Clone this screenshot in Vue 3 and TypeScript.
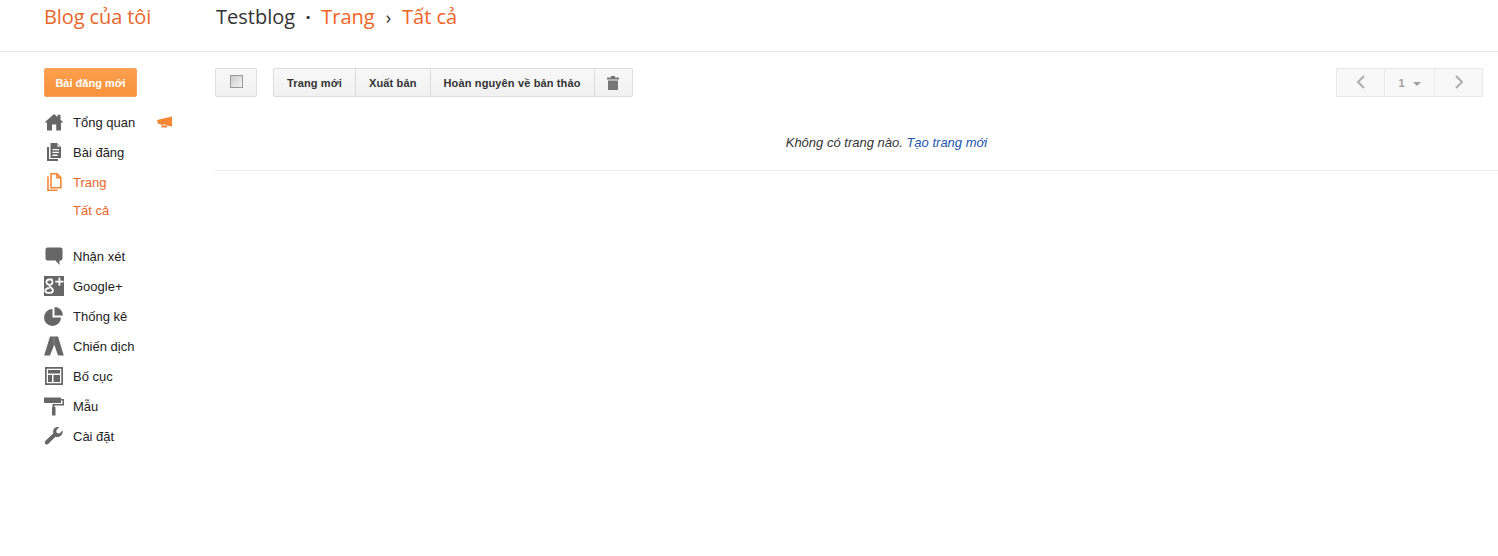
<script setup lang="ts">
interface NavItem {
  label: string;
  icon: string;
}

const navTop: NavItem[] = [
  { label: 'Tổng quan', icon: 'home' },
  { label: 'Bài đăng', icon: 'posts' },
];

const navBottom: NavItem[] = [
  { label: 'Nhận xét', icon: 'comment' },
  { label: 'Google+', icon: 'gplus' },
  { label: 'Thống kê', icon: 'stats' },
  { label: 'Chiến dịch', icon: 'ads' },
  { label: 'Bố cục', icon: 'layout' },
  { label: 'Mẫu', icon: 'template' },
  { label: 'Cài đặt', icon: 'settings' },
];

const actions = ['Trang mới', 'Xuất bản', 'Hoàn nguyên về bản thảo'];
</script>

<template>
  <div class="page">
    <header class="topbar">
      <div class="brand">Blog của tôi</div>
      <div class="crumbs">
        <span class="blog">Testblog</span>
        <span class="sep dot">·</span>
        <span class="orange">Trang</span>
        <span class="sep">›</span>
        <span class="orange">Tất cả</span>
      </div>
    </header>

    <div class="body">
      <aside class="sidebar">
        <button class="new-post">Bài đăng mới</button>
        <ul class="nav">
          <li v-for="item in navTop" :key="item.label" class="nav-item">
            <svg class="icon" width="20" height="20" viewBox="0 0 20 20">
              <path v-if="item.icon === 'home'" fill="#666" d="M.5 10.500 10 2l3.500 3V2.800h3v5L19.500 10.500H17V18.500h-4.800v-6H8v6H3V10.500z" />
              <g v-else>
                <path fill="#666" d="M3 5h2v12h9v2H3z" />
                <path fill="#666" fill-rule="evenodd" d="M6.500 1H13l4 4v11H6.500zM8.500 7v1.300h6.500V7zm0 2.800v1.300h6.500V9.800zm0 2.800v1.300h5v-1.300zM13.500 2v2.700H16z" />
              </g>
            </svg>
            <span>{{ item.label }}</span>
            <svg v-if="item.icon === 'home'" class="horn" width="16" height="12" viewBox="0 0 16 12">
              <path fill="#f58634" d="M0 4 15 .5v10L10 9.500V11.500H4.500V8.500L1 7.800z" />
              <path fill="#fff" d="M5.500 8.500h3.500v1H5.500z" />
            </svg>
          </li>
          <li class="nav-item active">
            <svg class="icon" width="20" height="20" viewBox="0 0 20 20">
              <path fill="none" stroke="#f58634" stroke-width="1.600" d="M7 1.800h6l3.800 3.800v10.200H7zM13 1.800v3.800h3.800" />
              <path fill="none" stroke="#f58634" stroke-width="1.600" d="M4 4.500v13.700h9.500" />
            </svg>
            <span>Trang</span>
          </li>
          <li class="nav-sub">Tất cả</li>
          <li class="nav-gap"></li>
          <li v-for="item in navBottom" :key="item.label" class="nav-item">
            <svg class="icon" width="20" height="20" viewBox="0 0 20 20">
              <path v-if="item.icon === 'comment'" fill="#666" d="M3.500 1.500h13a2 2 0 0 1 2 2v9a2 2 0 0 1-2 2h-1v4.500l-4-4.500h-8a2 2 0 0 1-2-2v-9a2 2 0 0 1 2-2z" />
              <g v-else-if="item.icon === 'gplus'">
                <rect x="0" y="0" width="20" height="20" fill="#666" />
                <path fill="#fff" d="M14.500 1.500h1.800v3.200h3.200v1.800h-3.200v3.200h-1.800V6.500h-3.200V4.700h3.200z" />
                <path fill="none" stroke="#fff" stroke-width="1.800" d="M8.500 3.500H5.500C3 3.500 2.200 5 2.500 6.500c.4 2 3 2.800 5 1.800 1.200-.7 1.300-3.300 0-4.800" />
                <path fill="none" stroke="#fff" stroke-width="1.800" d="M5.500 9.500c-.3 1.500 4 3 3.500 5.500-.5 2.500-6.500 2.500-7.500.5-.7-1.500 1-3.500 4-3.500" />
              </g>
              <g v-else-if="item.icon === 'stats'">
                <path fill="#666" d="M8.500 3v8.500H17A8.500 8.500 0 1 1 8.500 3z" />
                <path fill="#666" d="M10.500 1A8.500 8.500 0 0 1 19 9.500h-8.500z" />
              </g>
              <g v-else-if="item.icon === 'ads'">
                <path fill="#666" d="M6 .5h8L19.800 19.500H14L10.300 8.500 6 19.500H.2z" />
                <path fill="none" stroke="#999" stroke-width=".7" d="M10 .5V8.500" />
              </g>
              <g v-else-if="item.icon === 'layout'">
                <path fill="#666" fill-rule="evenodd" d="M1 1h18v18H1zm1.700 1.700v14.600h14.600V2.700z" />
                <path fill="#666" d="M4 4h12v3.500H4zM4 9h4v7H4zM9.500 9H16v7H9.500z" />
              </g>
              <g v-else-if="item.icon === 'template'">
                <path fill="#666" d="M0 1.500h17v5.500H0z" />
                <path fill="#666" d="M17 3h3v6.500H10.500v2.500H8.500V8h10V4.500H17z" />
                <rect x="8" y="11" width="3.500" height="8.500" fill="#666" />
              </g>
              <path v-else fill="#666" d="M18.700 4.500l-3.400 3-2.500-.6-.6-2.500 3-3.200c-2.700-.8-5.500.6-6 3.300-.2 1-.1 1.900.2 2.700L1.500 14.800c-1 1-1 2.300-.1 3.100.8.800 2.100.8 3-.1l7.100-7.100c.9.400 1.900.4 2.900.2 2.800-.6 4.700-3.200 4.300-6.400z" />
            </svg>
            <span>{{ item.label }}</span>
          </li>
        </ul>
      </aside>

      <main class="main">
        <div class="toolbar">
          <button class="btn select"><span class="checkbox"></span></button>
          <div class="group">
            <button v-for="a in actions" :key="a" class="btn">{{ a }}</button>
            <button class="btn trash">
              <svg width="12" height="14" viewBox="0 0 12 14">
                <path fill="#777" d="M4 0h4v1.500h4V3.500H0V1.500h4zM1 4.500h10V14H1z" />
              </svg>
            </button>
          </div>
          <div class="pager">
            <button class="pg">
              <svg width="10" height="14" viewBox="0 0 10 14"><path fill="none" stroke="#999" stroke-width="2" d="M8 1 2 7l6 6" /></svg>
            </button>
            <button class="pg num">1 <i class="caret"></i></button>
            <button class="pg">
              <svg width="10" height="14" viewBox="0 0 10 14"><path fill="none" stroke="#999" stroke-width="2" d="M2 1l6 6-6 6" /></svg>
            </button>
          </div>
        </div>
        <p class="empty">Không có trang nào. <a href="#">Tạo trang mới</a></p>
      </main>
    </div>
  </div>
</template>

<style>
html, body { background: #fff; }
</style>

<style scoped>
.page {
  width: 1498px;
  height: 556px;
  overflow: hidden;
  font-family: Arial, "Liberation Sans", sans-serif;
  font-size: 13px;
  color: #222;
}

.topbar {
  display: flex;
  height: 51px;
  border-bottom: 1px solid #e5e5e5;
  font-family: "Open Sans", sans-serif;
  font-size: 20px;
  line-height: 34px;
}

.brand {
  width: 216px;
  padding-left: 44px;
  box-sizing: border-box;
  color: #e8662a;
  letter-spacing: -.1px;
}

.crumbs {
  display: flex;
  color: #333;
}

.orange { color: #f1641e; }
.sep { margin: 0 11px; font-size: 18px; }
.dot { font-weight: 700; margin: 0 10.5px; }

.body { display: flex; }

.sidebar {
  width: 215px;
  flex: none;
  padding: 16px 0 0 44px;
  box-sizing: border-box;
}

.new-post {
  display: block;
  width: 93px;
  height: 29px;
  padding: 0;
  border: 1px solid #f3a15c;
  border-radius: 2px;
  background: linear-gradient(#fd9f4c, #f8923c);
  color: #fff;
  font: bold 11px Arial, "Liberation Sans", sans-serif;
}

.nav {
  list-style: none;
  margin: 10px 0 0;
  padding: 0;
}

.nav-item {
  position: relative;
  display: flex;
  align-items: center;
  height: 30px;
  gap: 9px;
}

.icon { flex: none; }

.nav-item.active { color: #e8662a; }

.horn {
  position: absolute;
  left: 113px;
  top: 9px;
}

.nav-sub {
  height: 28px;
  line-height: 28px;
  padding-left: 29px;
  color: #e8662a;
}

.nav-gap { height: 16px; }

.main { flex: 1; min-width: 0; }

.toolbar {
  display: flex;
  align-items: flex-start;
  padding-top: 16px;
  padding-right: 15px;
}

.btn {
  height: 29px;
  padding: 0 13px;
  border: 1px solid #dcdcdc;
  background: linear-gradient(#f8f8f8, #f1f1f1);
  color: #333;
  font: bold 11px Arial, "Liberation Sans", sans-serif;
  letter-spacing: .14px;
  border-radius: 2px;
}

.select {
  width: 42px;
  margin-right: 16px;
  padding: 0;
  display: flex;
  align-items: center;
  justify-content: center;
}

.checkbox {
  display: block;
  width: 13px;
  height: 13px;
  box-sizing: border-box;
  margin-top: -2px;
  border: 1px solid #999;
  background: linear-gradient(135deg, #ccc, #f4f4f4);
}

.group { display: flex; }

.group .btn { border-radius: 0; margin-left: -1px; }
.group .btn:first-child { margin-left: 0; border-radius: 2px 0 0 2px; }
.group .btn:last-child { border-radius: 0 2px 2px 0; }

.trash { width: 39px; padding: 2px 0 0; }

.pager {
  display: flex;
  margin-left: auto;
  opacity: .8;
}

.pg {
  width: 49px;
  height: 29px;
  padding: 0;
  margin-left: -1px;
  border: 1px solid #e4e4e4;
  background: #f7f7f7;
  color: #888;
  font: bold 11px Arial, "Liberation Sans", sans-serif;
}

.pg.num { width: 51px; }

.caret {
  display: inline-block;
  margin-left: 5px;
  vertical-align: middle;
  border: 4px solid transparent;
  border-top-color: #888;
  border-bottom: 0;
}

.empty {
  margin: 0;
  height: 73px;
  line-height: 91px;
  border-bottom: 1px solid #ebebeb;
  padding-left: 60px;
  text-align: center;
  font-style: italic;
  font-size: 13px;
  color: #333;
}

.empty a { color: #2255aa; text-decoration: none; }
</style>
